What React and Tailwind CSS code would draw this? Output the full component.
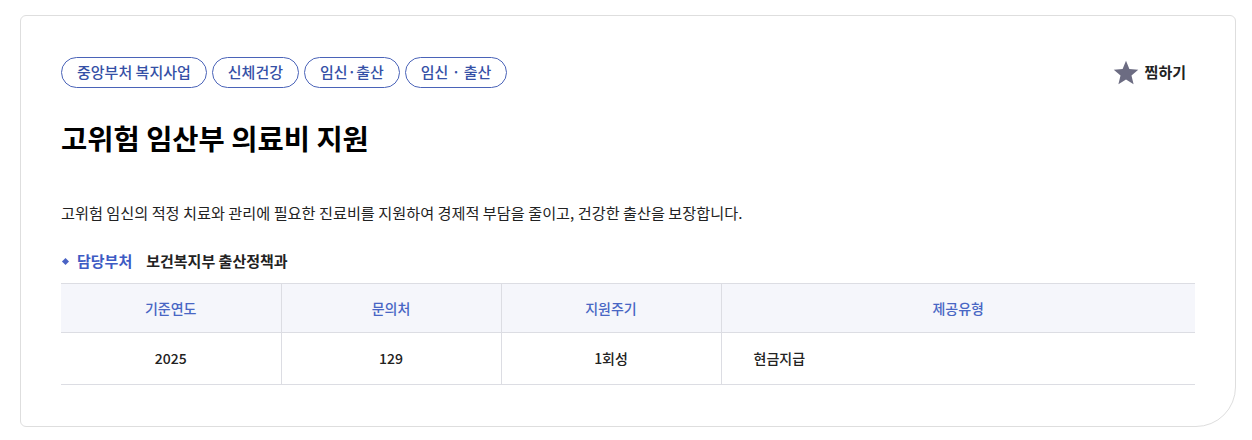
import React from 'react';

const tags = ['중앙부처 복지사업', '신체건강', '임신·출산', '임신 · 출산'];

const StarIcon = () => (
  <svg width="28" height="28" viewBox="0 0 24 24" aria-hidden="true">
    <polygon
      points="12,1.5 14.9,8.6 22.5,9.2 16.7,14.1 18.5,21.6 12,17.6 5.5,21.6 7.3,14.1 1.5,9.2 9.1,8.6"
      fill="#6c6c82"
    />
  </svg>
);

export default function App() {
  return (
    <div
      className="bg-white w-[1252px] h-[440px] pt-[15px] pl-[20px] pr-[16px]"
      style={{ fontFamily: '"Noto Sans CJK KR", "Noto Sans", sans-serif' }}
    >
      <div className="border border-[#dedede] rounded-[6px] rounded-br-[40px] h-[412px] pt-[41px] pl-[40px] pr-[40px]">
        <div className="flex items-center justify-between h-[31px]">
          <div className="flex gap-[5px]">
            {tags.map((t) => (
              <span
                key={t}
                className="h-[31px] flex items-center px-[15px] border border-[#4a63b8] rounded-full text-[15px] font-medium text-[#3550a6]"
              >
                {t}
              </span>
            ))}
          </div>
          <button className="flex items-center gap-[5px] mr-[9px] text-[15px] font-bold text-[#222]">
            <StarIcon />
            찜하기
          </button>
        </div>

        <h1 className="mt-[30px] text-[28.5px] leading-[40px] font-bold text-black">
          고위험 임산부 의료비 지원
        </h1>

        <p className="mt-[42px] text-[15.2px] leading-[24px] text-[#222]">
          고위험 임신의 적정 치료와 관리에 필요한 진료비를 지원하여 경제적 부담을 줄이고, 건강한 출산을 보장합니다.
        </p>

        <div className="mt-[25px] flex items-center h-[24px] text-[15px] font-semibold">
          <span className="w-[5px] h-[5px] bg-[#4a63c4] rotate-45 ml-[2px] mr-[9px]"></span>
          <span className="text-[#3d5bc4]">담당부처</span>
          <span className="ml-[14px] text-[#222]">보건복지부 출산정책과</span>
        </div>

        <table className="mt-[10px] w-full border-collapse text-[14px]">
          <thead>
            <tr className="bg-[#f5f6fb] border-t border-b border-[#dcdde3] h-[49px]">
              <th className="w-[220px] font-medium text-[#4866c4] border-r border-[#dcdde3]">기준연도</th>
              <th className="w-[220px] font-medium text-[#4866c4] border-r border-[#dcdde3]">문의처</th>
              <th className="w-[220px] font-medium text-[#4866c4] border-r border-[#dcdde3]">지원주기</th>
              <th className="font-medium text-[#4866c4]">제공유형</th>
            </tr>
          </thead>
          <tbody>
            <tr className="border-b border-[#dcdde3] h-[52px]">
              <td className="text-center font-medium text-[#222] border-r border-[#dcdde3]">2025</td>
              <td className="text-center font-medium text-[#222] border-r border-[#dcdde3]">129</td>
              <td className="text-center font-medium text-[#222] border-r border-[#dcdde3]">1회성</td>
              <td className="pl-[32px] font-medium text-[#222]">현금지급</td>
            </tr>
          </tbody>
        </table>
      </div>
    </div>
  );
}
